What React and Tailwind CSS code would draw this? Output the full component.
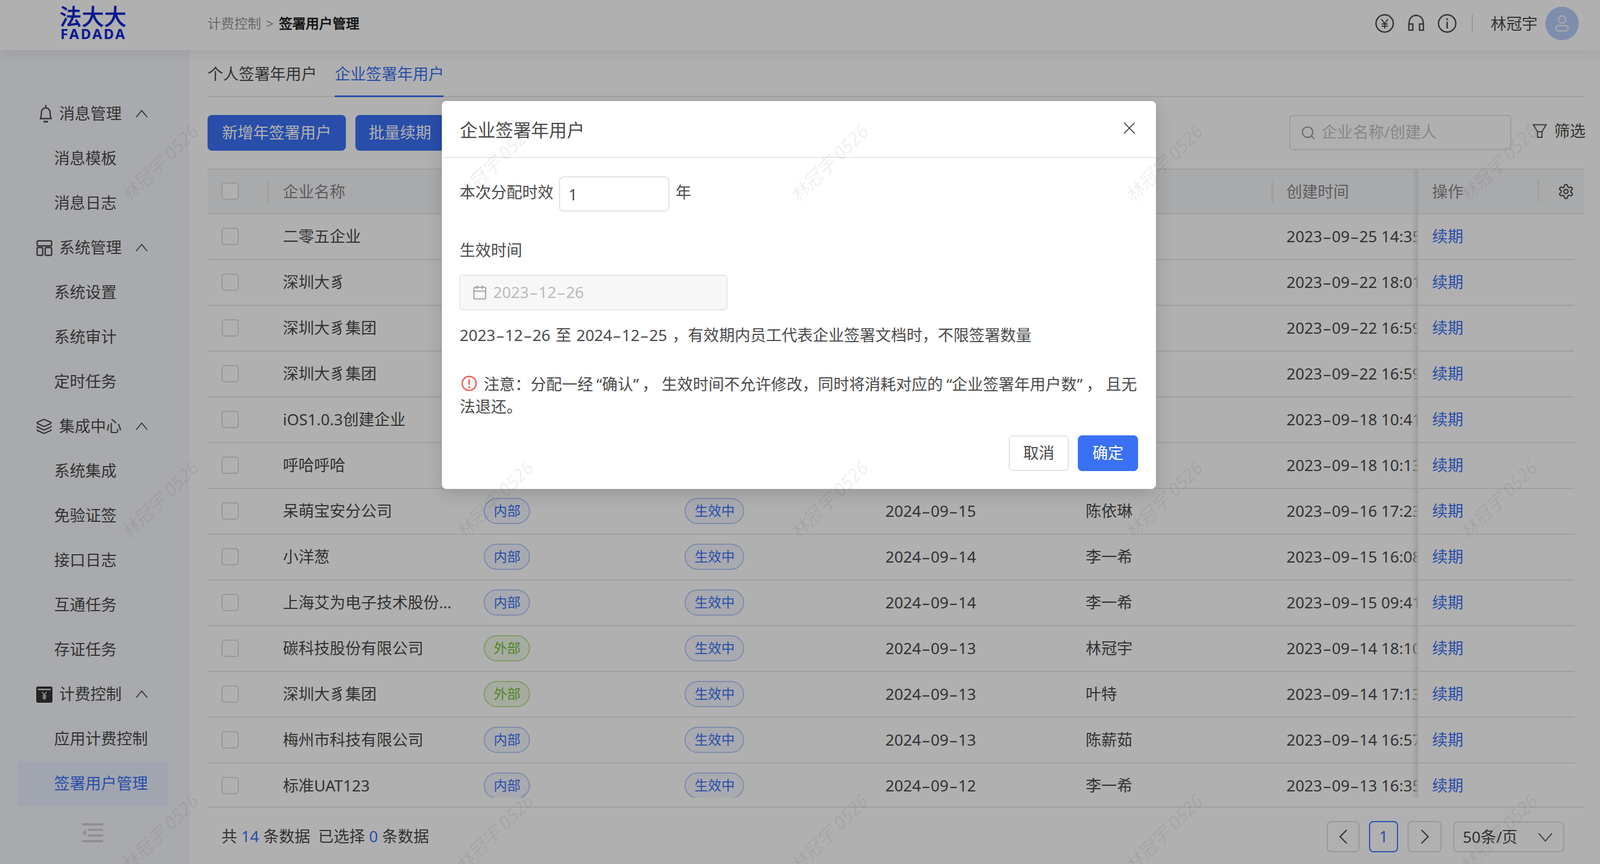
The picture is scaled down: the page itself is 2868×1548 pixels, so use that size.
import React from "react";
import { Layers, Search, Calendar } from "lucide-react";

const FONT = "[font-family:'Liberation_Sans','Noto_Sans_CJK_SC',sans-serif]";

const rows = [
  ["二零五企业", "", "", "", "", "2023-09-25 14:35"],
  ["深圳大豸", "", "", "", "", "2023-09-22 18:01"],
  ["深圳大豸集团", "", "", "", "", "2023-09-22 16:59"],
  ["深圳大豸集团", "", "", "", "", "2023-09-22 16:59"],
  ["iOS1.0.3创建企业", "", "", "", "", "2023-09-18 10:41"],
  ["呼哈呼哈", "", "", "", "", "2023-09-18 10:13"],
  ["呆萌宝安分公司", "内部", "生效中", "2024-09-15", "陈依琳", "2023-09-16 17:23"],
  ["小洋葱", "内部", "生效中", "2024-09-14", "李一希", "2023-09-15 16:08"],
  ["上海艾为电子技术股份有限公司", "内部", "生效中", "2024-09-14", "李一希", "2023-09-15 09:41"],
  ["碳科技股份有限公司", "外部", "生效中", "2024-09-13", "林冠宇", "2023-09-14 18:10"],
  ["深圳大豸集团", "外部", "生效中", "2024-09-13", "叶特", "2023-09-14 17:13"],
  ["梅州市科技有限公司", "内部", "生效中", "2024-09-13", "陈薪茹", "2023-09-14 16:57"],
  ["标准UAT123", "内部", "生效中", "2024-09-12", "李一希", "2023-09-13 16:35"],
];

function D({ v }) {
  const parts = v.split("-");
  return (
    <>
      {parts.map((p, i) => (
        <React.Fragment key={i}>
          {i > 0 && <span className="mx-[1.6px]">–</span>}
          {p}
        </React.Fragment>
      ))}
    </>
  );
}

const Up = () => (
  <svg width="22" height="14" viewBox="0 0 22 14" fill="none" stroke="#4a4a4a" strokeWidth="1.8" className="ml-[25px]">
    <path d="M1 13 11 1l10 12" />
  </svg>
);

const BellIcon = () => (
  <svg width="24" height="32" viewBox="0 0 24 32" fill="none" stroke="#4a4a4a" strokeWidth="2.400">
    <path d="M12 0v4" />
    <path d="M2.500 24.500c1.200-3 1.800-5 1.800-11.500a7.700 7.700 0 0 1 15.400 0c0 6.500.6 8.500 1.800 11.500z" />
    <path d="M8 30h8" strokeWidth="3" />
  </svg>
);

const SysIcon = () => (
  <svg width="29" height="29" viewBox="0 0 29 29" fill="none" stroke="#4a4a4a" strokeWidth="2.400">
    <rect x="1.500" y="1.500" width="26" height="9" rx="2" />
    <rect x="1.500" y="13.500" width="10" height="14" rx="2" />
    <rect x="16" y="13.500" width="11.500" height="14" rx="2" />
  </svg>
);

const BillIcon = () => (
  <svg width="29" height="29" viewBox="0 0 29 29">
    <rect x="0" y="0" width="29" height="29" rx="3" fill="#333" />
    <rect x="3" y="4" width="23" height="2.500" fill="#ddd" />
    <path d="M10.500 10l4 5 4-5M14.500 15v9M11 17h7M11 20.500h7" stroke="#ddd" strokeWidth="1.800" fill="none" />
  </svg>
);

function Group({ icon, label }) {
  return (
    <div className="h-[80px] flex items-center text-[28px] text-[#4a4a4a]">
      <div className="w-[106px] flex justify-end pr-[12px]">{icon}</div>
      <span className="pb-[3px]">{label}</span>
      <Up />
    </div>
  );
}

function Sub({ label, active }) {
  return active ? (
    <div className="h-[80px] ml-[32px] w-[268px] pl-[65px] pb-[3px] flex items-center text-[28px] text-[#3b72f5] bg-[#e9f0ff]">{label}</div>
  ) : (
    <div className="h-[80px] pl-[97px] pb-[3px] flex items-center text-[28px] text-[#4a4a4a]">{label}</div>
  );
}

function Tag({ text, green, w }) {
  return (
    <span
      className={`h-[47px] -mt-[1px] rounded-[24px] border-2 pb-[2px] flex items-center justify-center text-[24px] ${w} ${
        green ? "bg-[#f0f9e8] border-[#bbe096] text-[#76c23a]" : "bg-[#f3f6ff] border-[#b9caf8] text-[#3b72f5]"
      }`}
    >
      {text}
    </span>
  );
}

const Checkbox = () => <span className="block w-[31px] h-[31px] -mt-[1px] rounded-[5px] border-2 border-[#dcdcdc] bg-white" />;

function Row({ r }) {
  return (
    <div className="h-[82px] w-[2450px] border-b-2 border-[#e6e6e6] flex items-center text-[28px] text-[#4a4a4a] relative">
      <div className="w-[135px] pl-[25px]"><Checkbox /></div>
      <div className="w-[360px] pb-[3px]"><div className="w-[316px] truncate">{r[0]}</div></div>
      <div className="w-[360px]">{r[1] && <Tag text={r[1]} green={r[1] === "外部"} w="w-[83px]" />}</div>
      <div className="w-[360px]">{r[2] && <Tag text={r[2]} w="w-[107px]" />}</div>
      <div className="w-[359px] pb-[3px]">{r[3] && <D v={r[3]} />}</div>
      <div className="w-[360px] pb-[3px]">{r[4]}</div>
      <div className="w-[236px] pb-[3px] overflow-hidden whitespace-nowrap"><D v={r[5]} /></div>
      <div className="absolute left-[2158px] top-0 h-[80px] w-[12px] bg-gradient-to-l from-[#e4e4e4] to-transparent" />
      <div className="pl-[25px] pb-[3px] text-[#3b72f5]">续期</div>
    </div>
  );
}

const HeadSep = ({ x }) => <span className="absolute top-[21px] h-[40px] w-[3px] bg-[#e8e8e8]" style={{ left: x }} />;

function Watermark({ cx, cy }) {
  return (
    <div className="absolute w-[210px] h-[207px] overflow-hidden" style={{ left: cx - 105, top: cy - 140 }}>
      <div className="absolute left-[105px] top-[140px] w-0 h-0 flex items-center justify-center">
        <span className="whitespace-nowrap rotate-[-45deg] italic text-[33px] text-[rgba(0,0,0,0.07)]">林冠宇 0526</span>
      </div>
    </div>
  );
}

export default function App() {
  const wx = [286, 886, 1486, 2086, 2686];
  const wy = [293, 896, 1493];
  return (
    <div lang="zh-CN" className={`relative w-[2868px] h-[1548px] overflow-hidden bg-white ${FONT}`}>
      {/* top bar */}
      <header className="relative z-10 h-[90px] bg-white shadow-[0_6px_24px_rgba(0,0,0,0.08)] flex items-center">
        <div className="absolute left-[106px] top-[9px] w-[121px] text-[#0f25d0] text-center font-black leading-none">
          <div className="text-[39px] tracking-[1px] h-[42px] leading-[39px] whitespace-nowrap font-black">法大大</div>
          <div className="-mt-[3px] text-[25px] tracking-[3px] whitespace-nowrap font-bold pl-[2px]">FADADA</div>
        </div>
        <div className="absolute left-[372px] top-[29px] flex items-center text-[24px] leading-[26px] whitespace-nowrap">
          <span className="text-[#999]">计费控制</span>
          <span className="text-[#999] mx-[9px]">&gt;</span>
          <span className="text-[#222] font-bold">签署用户管理</span>
        </div>
        <svg className="absolute left-[2465px] top-[25px]" width="34" height="34" viewBox="0 0 34 34" fill="none" stroke="#4a4a4a" strokeWidth="2.400">
          <circle cx="17" cy="17" r="15.500" />
          <path d="M11 9l6 8 6-8M17 17v9M11.500 18h11M11.500 22h11" strokeWidth="2" />
        </svg>
        <svg className="absolute left-[2524px] top-[26px]" width="29" height="30" viewBox="0 0 29 30" fill="none" stroke="#4a4a4a" strokeWidth="2.400">
          <path d="M2 18V14a12.500 12.500 0 0 1 25 0v4" />
          <rect x="1.500" y="17" width="7" height="11" />
          <rect x="20.500" y="17" width="7" height="11" />
        </svg>
        <svg className="absolute left-[2577px] top-[25px]" width="34" height="34" viewBox="0 0 34 34" fill="none" stroke="#4a4a4a" strokeWidth="2.400">
          <circle cx="17" cy="17" r="15.500" />
          <path d="M17 14v12" strokeWidth="2.600" />
          <circle cx="17" cy="9.500" r="1.700" fill="#4a4a4a" stroke="none" />
        </svg>
        <span className="absolute left-[2638px] top-[26px] w-[2px] h-[32px] bg-[#ddd]" />
        <span className="absolute left-[2672px] top-[28px] text-[28px] leading-[28px] text-[#4a4a4a]">林冠宇</span>
        <div className="absolute left-[2770px] top-[12px] w-[60px] h-[60px] rounded-full bg-[#b9cdfb] flex items-center justify-center">
          <svg width="26" height="32" viewBox="0 0 26 32" fill="none" stroke="#f3f3f3" strokeWidth="2.400">
            <circle cx="13" cy="9" r="6.500" />
            <rect x="2" y="20" width="22" height="9.500" rx="4.700" />
          </svg>
        </div>
      </header>

      <div className="flex h-[1458px]">
        {/* sidebar */}
        <aside className="w-[339px] shrink-0 bg-[#f5f7fb] pt-[74px] relative">
          <Group icon={<BellIcon />} label="消息管理" />
          <Sub label="消息模板" />
          <Sub label="消息日志" />
          <Group icon={<SysIcon />} label="系统管理" />
          <Sub label="系统设置" />
          <Sub label="系统审计" />
          <Sub label="定时任务" />
          <Group icon={<Layers size={30} color="#4a4a4a" strokeWidth={1.8} />} label="集成中心" />
          <Sub label="系统集成" />
          <Sub label="免验证签" />
          <Sub label="接口日志" />
          <Sub label="互通任务" />
          <Sub label="存证任务" />
          <Group icon={<BillIcon />} label="计费控制" />
          <Sub label="应用计费控制" />
          <Sub label="签署用户管理" active />
          <svg className="absolute left-[147px] top-[1385px]" width="38" height="34" viewBox="0 0 38 34" fill="#d0d0d0">
            <rect width="38" height="4" />
            <rect x="11" y="10" width="27" height="3.500" />
            <rect x="11" y="20" width="27" height="4" />
            <rect y="30" width="38" height="4" />
            <path d="M7 11v12L0 17z" />
          </svg>
        </aside>

        {/* main */}
        <main className="flex-1 pl-[33px] pr-[28px] text-[28px] text-[#4a4a4a] min-w-0">
          <div className="h-[84px] border-b-2 border-[#e6e6e6] flex items-center relative pt-[1px]">
            <span>个人签署年用户</span>
            <span className="ml-[32px] text-[#3b72f5]">企业签署年用户</span>
            <span className="absolute left-[228px] -bottom-[2px] w-[195px] h-[3px] bg-[#3b72f5]" />
          </div>

          <div className="mt-[32px] h-[64px] flex items-center relative">
            <button className="h-[64px] w-[248px] pb-[3px] rounded-[8px] bg-[#3b72f5] text-white text-[28px]">新增年签署用户</button>
            <button className="ml-[17px] h-[64px] w-[160px] pb-[3px] rounded-[8px] bg-[#3b72f5] text-white text-[28px]">批量续期</button>
            <div className="absolute left-[1939px] top-0 w-[398px] h-[63px] border-2 border-[#e2e2e2] rounded-[6px] flex items-center pl-[19px] text-[#c4c4c4]">
              <Search size={28} color="#999" strokeWidth={1.8} className="-ml-[1px]" />
              <span className="ml-[10px] pb-[3px]">企业名称/创建人</span>
            </div>
            <svg className="absolute left-[2375px] top-[16px]" width="26" height="26" viewBox="0 0 26 26" fill="none" stroke="#555" strokeWidth="2">
              <path d="M1.500 1.500h23L17 14v10H9V14z" />
              <path d="M9 14h8" />
            </svg>
            <span className="absolute left-[2414px] top-[14px] leading-[28px] whitespace-nowrap">筛选</span>
          </div>

          {/* table head */}
          <div className="relative mt-[32px] h-[82px] bg-[#f5f7fa] border-y-2 border-[#e6e6e6] flex items-center text-[#888]">
            <div className="w-[135px] pl-[25px]"><Checkbox /></div>
            <span className="pb-[1px]">企业名称</span>
            <HeadSep x={107} />
            <HeadSep x={1907} />
            <span className="absolute left-[1934px] pb-[1px]">创建时间</span>
            <div className="absolute left-[2170px] top-0 h-[78px] w-[298px] bg-[#f5f7fa] flex items-center">
              <span className="ml-[25px] pb-[1px]">操作</span>
              <svg className="absolute left-[250px] top-[24px]" width="30" height="30" viewBox="0 0 24 24" fill="none" stroke="#4a4a4a" strokeWidth="1.800" strokeLinecap="round" strokeLinejoin="round">
                <path d="M12.220 2h-.44a2 2 0 0 0-2 2v.18a2 2 0 0 1-1 1.730l-.43.250a2 2 0 0 1-2 0l-.150-.080a2 2 0 0 0-2.730.730l-.220.380a2 2 0 0 0 .730 2.730l.150.100a2 2 0 0 1 1 1.720v.510a2 2 0 0 1-1 1.740l-.150.090a2 2 0 0 0-.730 2.730l.220.380a2 2 0 0 0 2.730.730l.150-.080a2 2 0 0 1 2 0l.430.250a2 2 0 0 1 1 1.730V20a2 2 0 0 0 2 2h.44a2 2 0 0 0 2-2v-.180a2 2 0 0 1 1-1.730l.430-.250a2 2 0 0 1 2 0l.150.080a2 2 0 0 0 2.730-.730l.220-.390a2 2 0 0 0-.730-2.730l-.150-.080a2 2 0 0 1-1-1.740v-.500a2 2 0 0 1 1-1.740l.150-.090a2 2 0 0 0 .730-2.730l-.220-.380a2 2 0 0 0-2.730-.730l-.150.080a2 2 0 0 1-2 0l-.430-.250a2 2 0 0 1-1-1.730V4a2 2 0 0 0-2-2z" />
                <circle cx="12" cy="12" r="3" />
              </svg>
              <span className="absolute left-[214px] top-[19px] h-[40px] w-[3px] bg-[#e8e8e8]" />
              <span className="absolute left-0 top-0 -ml-[12px] h-[78px] w-[12px] bg-gradient-to-l from-[#e2e4e8] to-transparent" />
            </div>
          </div>

          {/* table body */}
          <div className="h-[1045px] overflow-hidden">
            {rows.map((r, i) => (
              <Row key={i} r={r} />
            ))}
          </div>

          {/* footer */}
          <div className="mt-[16px] border-t-2 border-[#e6e6e6] h-[103px] flex items-start pt-[24px] relative">
            <span className="ml-[25px] mt-[13px] leading-[28px] whitespace-nowrap">
              共 <span className="text-[#3b72f5]">14</span> 条数据&nbsp;&nbsp;已选择 <span className="text-[#3b72f5]">0</span> 条数据
            </span>
            <div className="absolute left-[2006px] top-[24px] w-[59px] h-[56px] border-2 border-[#dedede] rounded-[8px] flex items-center justify-center">
              <svg width="16" height="26" viewBox="0 0 16 26" fill="none" stroke="#4a4a4a" strokeWidth="2.200"><path d="M14 1 2 13l12 12" /></svg>
            </div>
            <div className="absolute left-[2082px] top-[24px] w-[52px] h-[56px] border-2 border-[#3b72f5] rounded-[8px] pb-[2px] flex items-center justify-center text-[#3b72f5]">1</div>
            <div className="absolute left-[2151px] top-[24px] w-[61px] h-[56px] border-2 border-[#dedede] rounded-[8px] flex items-center justify-center">
              <svg width="16" height="26" viewBox="0 0 16 26" fill="none" stroke="#4a4a4a" strokeWidth="2.200"><path d="M2 1l12 12L2 25" /></svg>
            </div>
            <div className="absolute left-[2233px] top-[25px] w-[199px] h-[55px] border-2 border-[#dedede] rounded-[8px] pb-[2px] flex items-center pl-[15px] whitespace-nowrap">
              50条/页
              <svg className="absolute left-[150px] top-[18px]" width="26" height="16" viewBox="0 0 26 16" fill="none" stroke="#666" strokeWidth="2"><path d="M1 1l12 14L25 1" /></svg>
            </div>
          </div>
        </main>
      </div>

      {/* dim layer */}
      <div className="absolute inset-0 z-20 bg-[rgba(0,0,0,0.31)]" />

      {/* modal */}
      <div className="absolute z-30 left-[792px] top-[181px] w-[1280px] h-[695px] bg-white rounded-[8px] shadow-[0_8px_30px_rgba(0,0,0,0.15)] text-[28px] text-[#4a4a4a]">
        <div className="h-[102px] border-b-2 border-[#e8e8e8] pl-[32px] pt-[4px] flex items-center text-[32px]">企业签署年用户</div>
        <svg className="absolute left-[1222px] top-[38px]" width="21" height="21" viewBox="0 0 21 21" fill="none" stroke="#4a4a4a" strokeWidth="1.800"><path d="M1 1l19 19M20 1 1 20" /></svg>

        <span className="absolute left-[32px] top-[149px] leading-[28px]">本次分配时效</span>
        <div className="absolute left-[210px] top-[135px] w-[198px] h-[63px] border-2 border-[#e2e2e2] rounded-[8px] flex items-center pl-[15px] pt-[1px]">1</div>
        <span className="absolute left-[419px] top-[149px] leading-[28px]">年</span>

        <span className="absolute left-[32px] top-[253px] leading-[28px]">生效时间</span>
        <div className="absolute left-[31px] top-[311px] w-[481px] h-[64px] border-2 border-[#e6e6e6] rounded-[6px] bg-[#f7f7f7] flex items-center pl-[21px] text-[#bbbbbb]">
          <Calendar size={28} color="#999" strokeWidth={1.6} />
          <span className="ml-[10px] pb-[3px]"><D v="2023-12-26" /></span>
        </div>

        <div className="absolute left-[32px] top-[405px] leading-[28px] whitespace-nowrap">
          <span className="[word-spacing:2px]"><D v="2023-12-26" /> 至 <D v="2024-12-25" /> </span>，有效期内员工代表企业签署文档时，不限签署数量
        </div>

        <svg className="absolute left-[35px] top-[492px]" width="28" height="28" viewBox="0 0 28 28" fill="none" stroke="#ea5a4f" strokeWidth="2.400">
          <circle cx="14" cy="14" r="12.500" />
          <path d="M14 6.500v10" strokeWidth="2.600" />
          <circle cx="14" cy="20.500" r="1.700" fill="#ea5a4f" stroke="none" />
        </svg>
        <div className="absolute left-[32px] top-[487px] w-[1220px] leading-[40px] whitespace-nowrap">
          <span className="ml-[43px]">
            注意：分配一经<span className="ml-[6px]">“</span>确认<span className="mr-[6px]">”</span>， 生效时间不允许修改，同时将消耗对应的<span className="ml-[6px]">“</span>企业签署年用户数<span className="mr-[6px]">”</span>， 且无
          </span>
          <br />
          法退还。
        </div>

        <button className="absolute left-[1016px] top-[599px] w-[108px] h-[64px] pb-[3px] border-2 border-[#e4e4e4] rounded-[8px] bg-white text-[28px] text-[#4a4a4a]">取消</button>
        <button className="absolute left-[1140px] top-[599px] w-[108px] h-[64px] pb-[3px] rounded-[8px] bg-[#3a70f3] text-[28px] text-white">确定</button>
      </div>

      {/* watermark */}
      <div className="absolute inset-0 z-40 pointer-events-none">
        {wy.map((y) => wx.map((x) => <Watermark key={x + "-" + y} cx={x} cy={y} />))}
      </div>
    </div>
  );
}
